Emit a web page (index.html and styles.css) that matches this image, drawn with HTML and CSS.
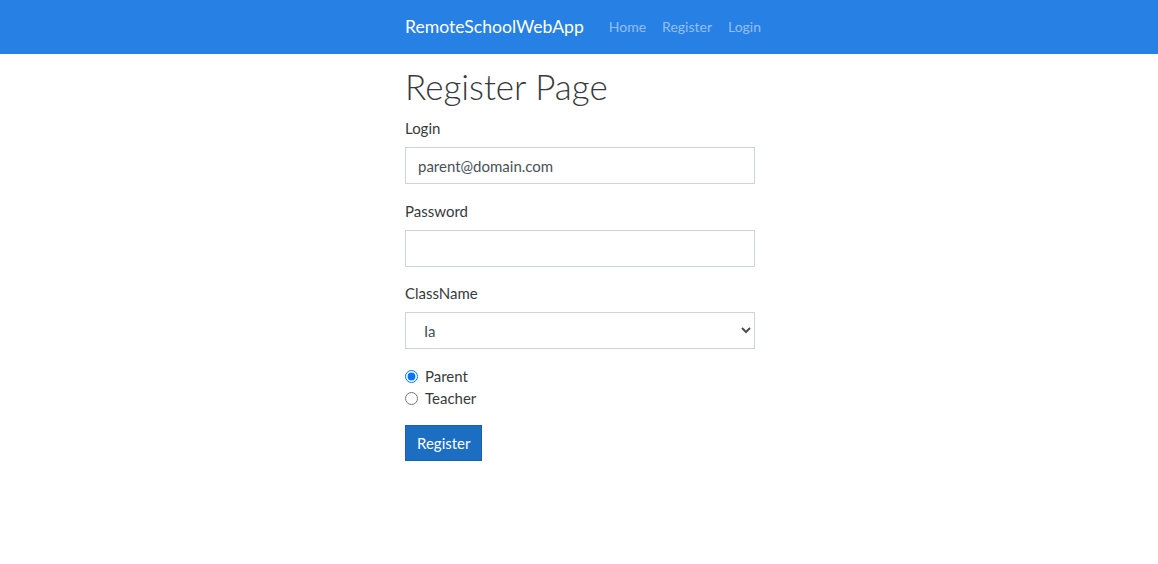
FILE: index.html
```html
<!DOCTYPE html>
<html lang="en">
<head>
<meta charset="utf-8">
<title>Register Page</title>
<link rel="stylesheet" href="styles.css">
</head>
<body>
<header class="navbar">
  <div class="wrap nav-inner">
    <a class="brand" href="#">RemoteSchoolWebApp</a>
    <nav class="nav-links">
      <a href="#">Home</a>
      <a href="#">Register</a>
      <a href="#">Login</a>
    </nav>
  </div>
</header>
<main class="wrap">
  <h1 class="title">Register Page</h1>
  <form class="form">
    <div class="group">
      <label class="label">Login</label>
      <input class="control" type="text" value="parent@domain.com">
    </div>
    <div class="group">
      <label class="label">Password</label>
      <input class="control" type="password">
    </div>
    <div class="group">
      <label class="label">ClassName</label>
      <select class="control select"><option>Ia</option></select>
    </div>
    <div class="radios">
      <label class="radio"><input type="radio" name="role" checked> Parent</label>
      <label class="radio"><input type="radio" name="role"> Teacher</label>
    </div>
    <button class="btn" type="button">Register</button>
  </form>
</main>
</body>
</html>
```

FILE: styles.css
```css
* { box-sizing: border-box; }
body {
  margin: 0;
  font-family: "Lato", "Open Sans", sans-serif;
  font-size: 15px;
  color: #373a3c;
  background: #fff;
}
.wrap {
  width: 350px;
  margin-left: calc(50% - 174px);
}
.navbar {
  background: #2780e3;
  height: 54px;
}
.nav-inner {
  display: flex;
  align-items: center;
  height: 53px;
  width: 500px;
}
.brand {
  color: #fff;
  text-decoration: none;
  font-size: 17.6px;
  margin-right: 25px;
}
.nav-links { display: flex; gap: 16px; }
.nav-links a {
  color: rgba(255,255,255,0.5);
  text-decoration: none;
  font-size: 14px;
}
.title {
  font-weight: 300;
  font-size: 35px;
  margin: 11px 0 10px;
  line-height: 42px;
}
.group { margin-bottom: 16px; }
.label {
  display: block;
  margin-bottom: 8px;
  line-height: 22px;
}
.control {
  display: block;
  width: 350px;
  height: 37px;
  padding: 6px 12px;
  border: 1px solid #ced4da;
  border-radius: 0;
  font-family: inherit;
  font-size: 15px;
  color: #495057;
  background: #fff;
}
.group:nth-child(2) { margin-bottom: 15px; }
.select { padding-left: 14px; }
.radios { margin-bottom: 16px; }
.radio {
  display: flex;
  align-items: center;
  gap: 7px;
  height: 22px;
}
.radio input { margin: 0; width: 13px; height: 13px; accent-color: #0075ff; }
.btn {
  display: block;
  background: #1b6ec2;
  border: 1px solid #1861ac;
  color: #fff;
  font-family: inherit;
  font-size: 15px;
  height: 36px;
  padding: 0 11px;
  border-radius: 0;
}
```
